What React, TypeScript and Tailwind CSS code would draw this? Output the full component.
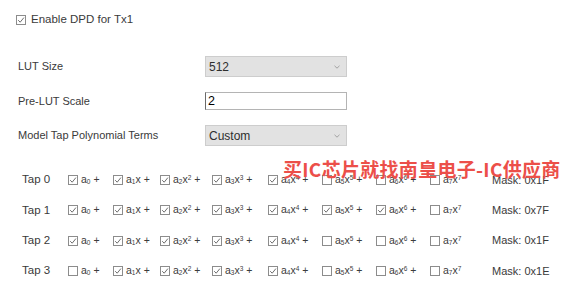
import type { ReactNode } from 'react';

const taps = [
  { name: 'Tap 0', mask: 0x1f },
  { name: 'Tap 1', mask: 0x7f },
  { name: 'Tap 2', mask: 0x1f },
  { name: 'Tap 3', mask: 0x1e },
];

function Box({ checked }: { checked: boolean }) {
  return (
    <svg width="10" height="10" viewBox="0 0 10 10" className="shrink-0">
      <rect x="0.5" y="0.5" width="9" height="9" fill="white" stroke="#8c8c8c" />
      {checked && <path d="M2.2 5.2 L4.2 7.2 L7.9 2.6" fill="none" stroke="#6e6e6e" strokeWidth="1" />}
    </svg>
  );
}

// a_i x^i term label
function Term({ i }: { i: number }): ReactNode {
  return (
    <span className="text-[10.5px] text-[#3c3c3c] whitespace-nowrap">
      a<span className="text-[6.5px] relative top-[1px]">{i}</span>
      {i > 0 && 'x'}
      {i > 1 && <span className="text-[6.5px] relative -top-[3px]">{i}</span>}
      {i < 7 && ' +'}
    </span>
  );
}

function Select({ value }: { value: string }) {
  return (
    <div className="w-[142px] h-[21px] bg-[#e2e2e2] border border-[#cdcdcd] flex items-center justify-between pl-[3px] pr-[6px]">
      <span className="text-[12px] text-[#2e2e2e]">{value}</span>
      <svg width="6" height="4" viewBox="0 0 6 4">
        <path d="M0.5 0.8 L3 3.2 L5.5 0.8" fill="none" stroke="#9a9a9a" strokeWidth="0.9" />
      </svg>
    </div>
  );
}

export default function App() {
  const cols = 'grid grid-cols-[68px_45px_47px_52px_56px_54px_54px_54px_62px_auto] items-center h-[20px]';
  return (
    <div className="relative w-[566px] h-[296px] bg-white overflow-hidden text-[11px] text-[#3a3a3a] font-['Liberation_Sans',Arial,sans-serif]">
      {/* Enable checkbox */}
      <div className="flex items-center gap-[5px] pl-[16px] pt-[13px] h-[27px]">
        <Box checked />
        <span className="text-[11.5px]">Enable DPD for Tx1</span>
      </div>

      {/* Settings */}
      <div className="flex flex-col gap-[13.5px] mt-[29px]">
        <div className="flex items-center h-[21px]">
          <span className="w-[205px] pl-[18px]">LUT Size</span>
          <Select value="512" />
        </div>
        <div className="flex items-center h-[21px]">
          <span className="w-[205px] pl-[18px]">Pre-LUT Scale</span>
          <div className="w-[142px] h-[18px] bg-white border border-[#b4b4b4] border-l-[#6a6a6a] flex items-center pl-[2px]">
            <span className="text-[12.5px] text-black">2</span>
          </div>
        </div>
        <div className="flex items-center h-[21px]">
          <span className="w-[205px] pl-[18px]">Model Tap Polynomial Terms</span>
          <Select value="Custom" />
        </div>
      </div>

      {/* Tap rows */}
      <div className="flex flex-col gap-[10.3px] mt-[24px]">
        {taps.map((t) => (
          <div key={t.name} className={cols}>
            <span className="pl-[22px] text-[11.5px] whitespace-nowrap">{t.name}</span>
            {Array.from({ length: 8 }, (_, i) => (
              <div key={i} className="flex items-center gap-[3px]">
                <Box checked={((t.mask >> i) & 1) === 1} />
                <Term i={i} />
              </div>
            ))}
            <span className="text-[11px] whitespace-nowrap">Mask: 0x{t.mask.toString(16).toUpperCase()}</span>
          </div>
        ))}
      </div>

      {/* watermark */}
      <div className="absolute left-[283px] top-[159px] text-[19px] tracking-[0.3px] font-bold leading-none text-[#ec4f49] whitespace-nowrap font-['Noto_Sans_CJK_SC',sans-serif]">
        买IC芯片就找南皇电子-IC供应商
      </div>
    </div>
  );
}
